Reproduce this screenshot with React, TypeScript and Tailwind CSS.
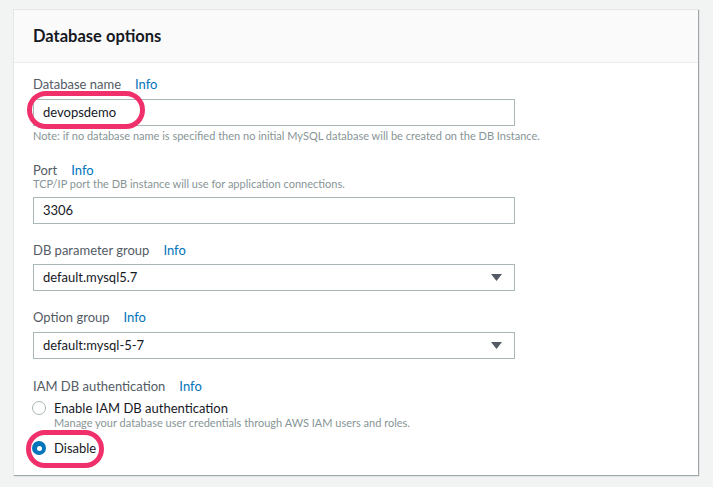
import React from "react";

const font = { fontFamily: '"Lato", "Open Sans", sans-serif' };

function Label({ text, className = "" }: { text: string; className?: string }) {
  return (
    <div className={"flex items-center text-[13px] leading-[18px] text-[#545b64] " + className}>
      <span>{text}</span>
      <span className="ml-[14px] text-[#0073bb]">Info</span>
    </div>
  );
}

function TextInput({ value, className = "" }: { value: string; className?: string }) {
  return (
    <div
      className={
        "flex h-[27px] w-[482px] items-center border border-[#aab7b8] bg-white pl-[9px] text-[13px] text-[#16191f] " +
        className
      }
    >
      {value}
    </div>
  );
}

function Select({ value, className = "" }: { value: string; className?: string }) {
  return (
    <div
      className={
        "flex h-[27px] w-[482px] items-center justify-between border border-[#aab7b8] bg-white pl-[9px] pr-[12px] text-[13px] text-[#16191f] " +
        className
      }
    >
      <span>{value}</span>
      <svg width="11" height="7" viewBox="0 0 11 7">
        <path d="M0 0 H11 L5.5 7 Z" fill="#545b64" />
      </svg>
    </div>
  );
}

export default function App() {
  return (
    <div className="relative h-[487px] w-[713px] overflow-hidden bg-[#f2f3f3] pl-[13px] pt-[9px]" style={font}>
      <div className="h-[466px] w-[685px] border-l border-t border-[#e3e7e7] bg-white shadow-[1px_1px_1px_0_rgba(0,28,36,0.35)]">
        <div className="flex h-[53px] items-center border-b border-[#eaeded] bg-[#fafafa] px-[19px]">
          <span className="text-[16.5px] font-bold text-[#16191f]">Database options</span>
        </div>
        <div className="px-[19px] pt-[12px]">
          <Label text="Database name" />
          <TextInput value="devopsdemo" className="mt-[6px]" />
          <div className="mt-[3px] text-[11px] leading-[14px] text-[#879596]">
            Note: if no database name is specified then no initial MySQL database will be created on the DB Instance.
          </div>

          <Label text="Port" className="mt-[18px]" />
          <div className="mt-[-2px] text-[11px] leading-[14px] text-[#879596]">
            TCP/IP port the DB instance will use for application connections.
          </div>
          <TextInput value="3306" className="mt-[6px]" />

          <Label text="DB parameter group" className="mt-[17px]" />
          <Select value="default.mysql5.7" className="mt-[5px]" />

          <Label text="Option group" className="mt-[17px]" />
          <Select value="default:mysql-5-7" className="mt-[6px]" />

          <Label text="IAM DB authentication" className="mt-[18px]" />
          <div className="mt-[3px] flex items-center text-[13px] leading-[20px] text-[#16191f]">
            <span className="ml-[-1px] mr-[8px] h-[14px] w-[14px] rounded-full border border-[#aab7b8] bg-white" />
            <span>Enable IAM DB authentication</span>
          </div>
          <div className="mt-[-2px] pl-[21px] text-[11px] leading-[14px] text-[#879596]">
            Manage your database user credentials through AWS IAM users and roles.
          </div>
          <div className="mt-[8px] flex items-center text-[13px] leading-[20px] text-[#16191f]">
            <span className="ml-[-1px] mr-[8px] flex h-[14px] w-[14px] items-center justify-center rounded-full bg-[#0073bb]">
              <span className="h-[5px] w-[5px] rounded-full bg-white" />
            </span>
            <span>Disable</span>
          </div>
        </div>
      </div>

      <div className="absolute left-[27px] top-[91px] h-[38px] w-[118px] rounded-full border-[5px] border-[#f0306a]" />
      <div className="absolute left-[26px] top-[430px] h-[38px] w-[78px] rounded-full border-[5px] border-[#f0306a]" />
    </div>
  );
}
